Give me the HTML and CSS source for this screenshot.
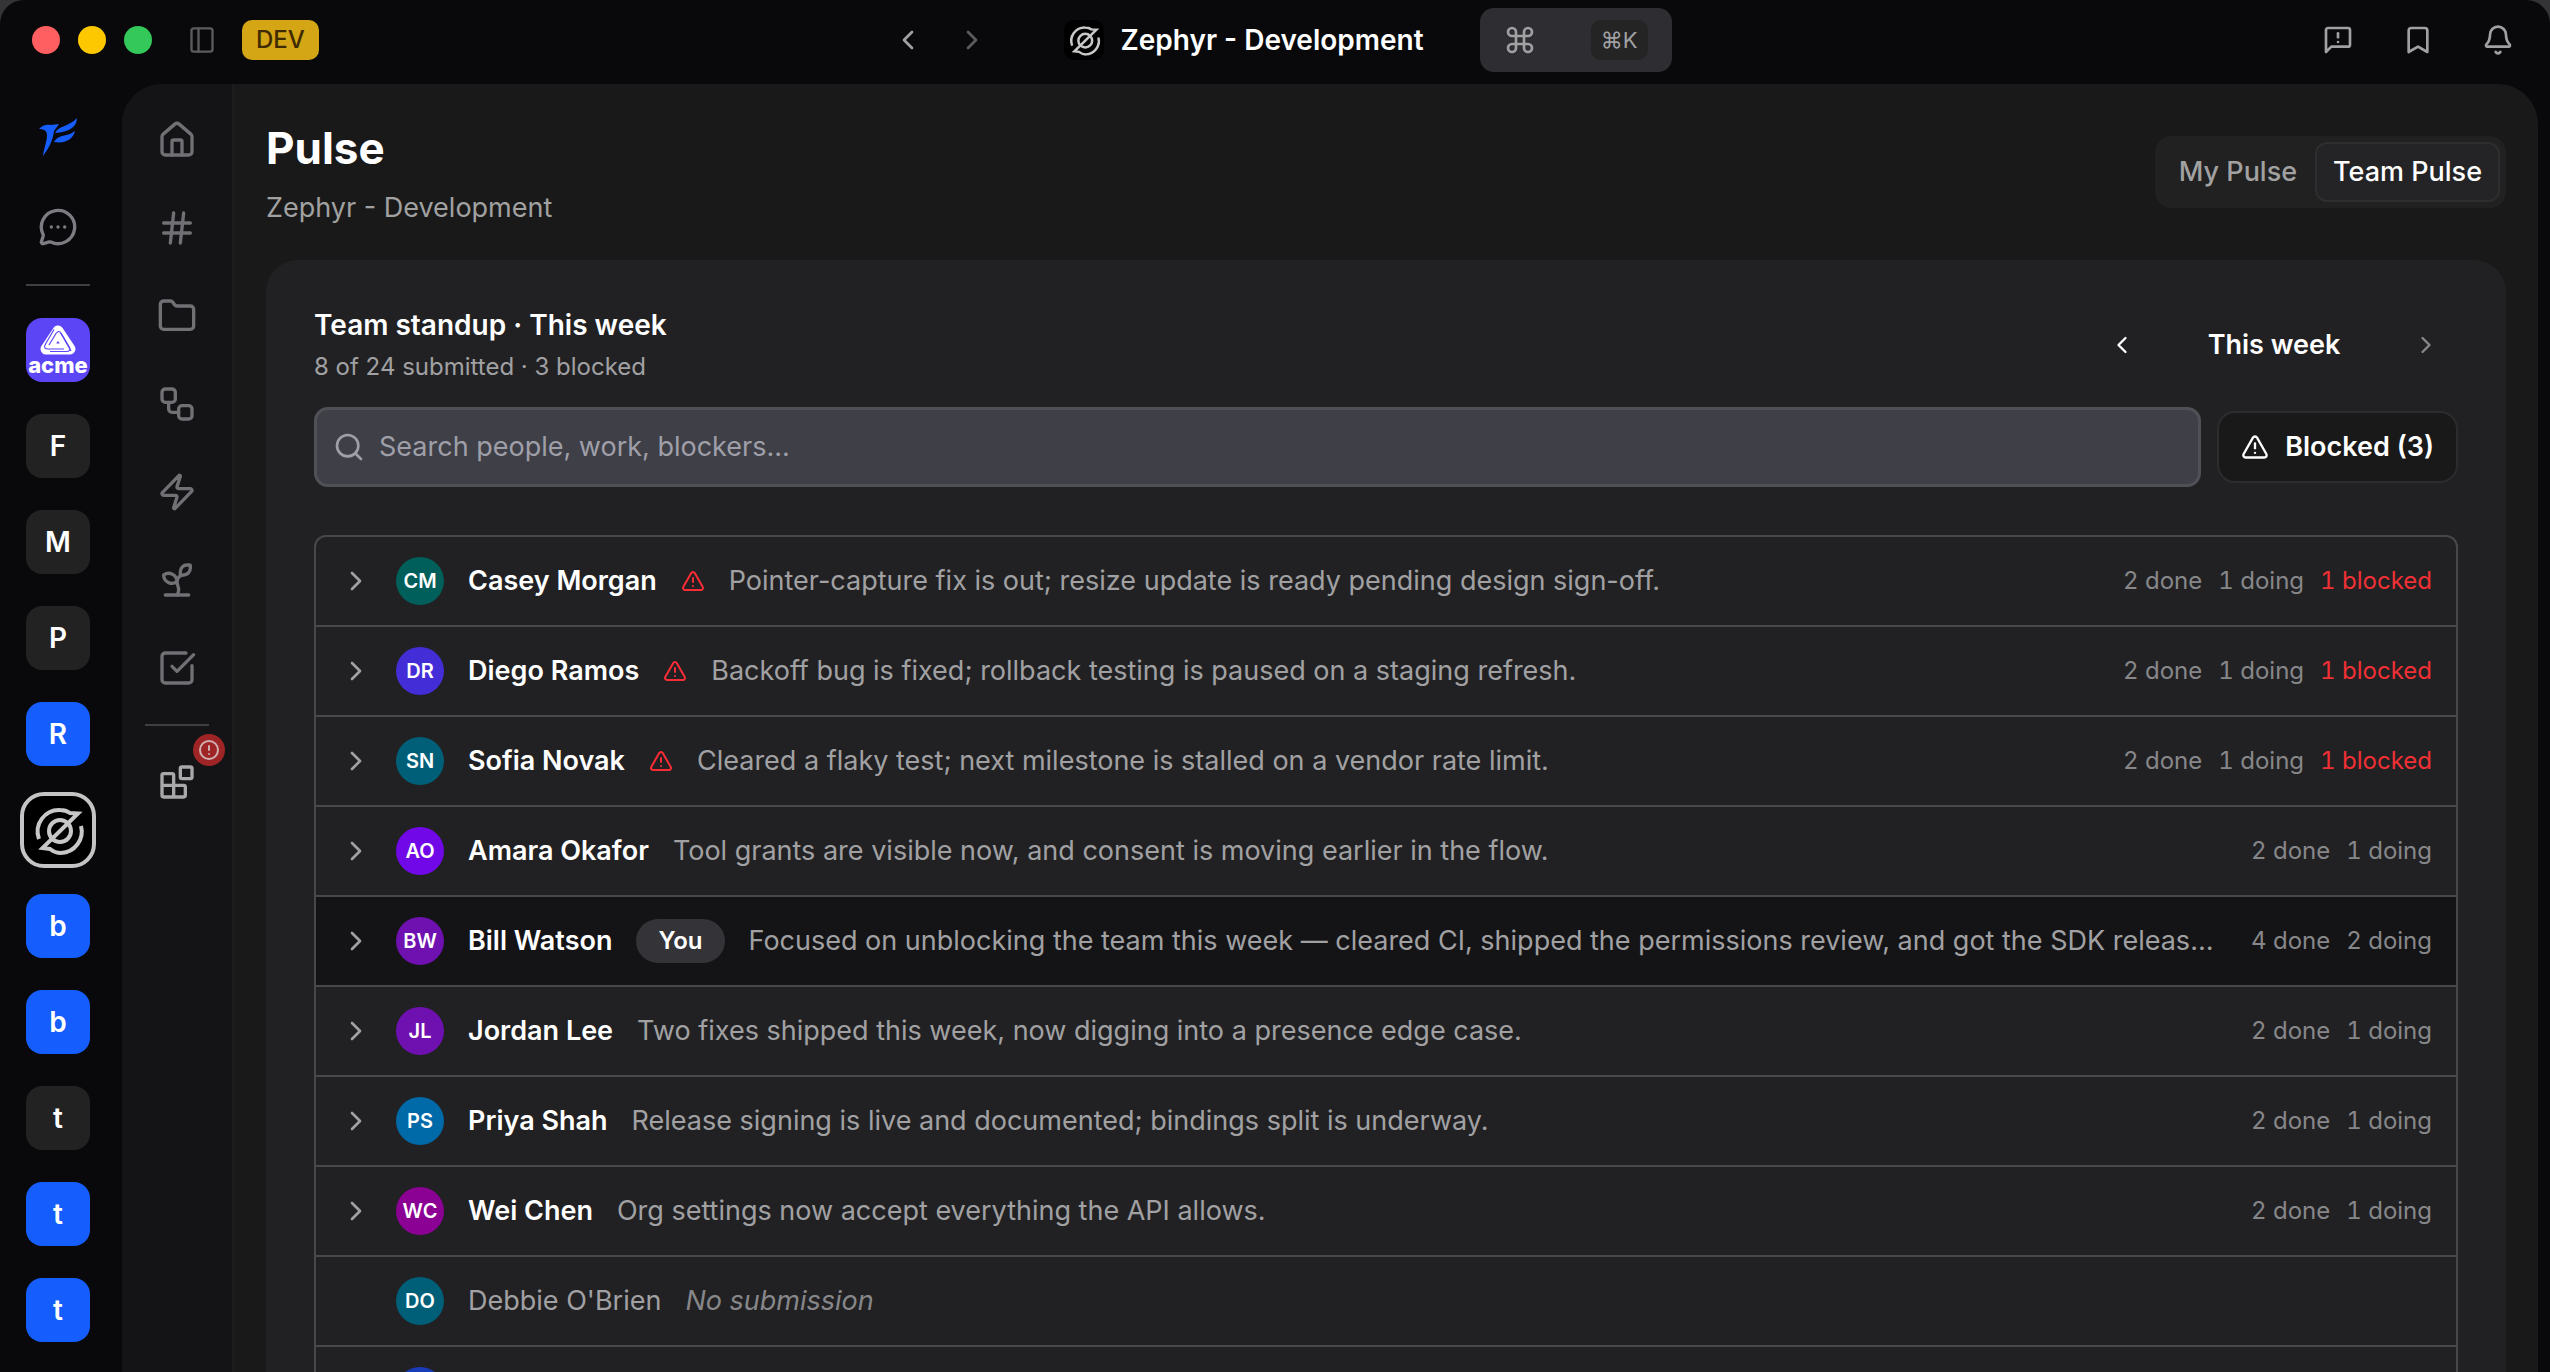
FILE: index.html
```html
<!DOCTYPE html>
<html lang="en">
<head>
    <meta charset="UTF-8">
    <meta name="viewport" content="width=device-width, initial-scale=1.0">
    <title>Pulse - Zephyr - Development</title>
    <link rel="stylesheet" href="styles.css">
</head>
<body>
    <!-- shared icon shapes -->
    <svg class="sprite" aria-hidden="true">
        <symbol id="i-left" viewBox="0 0 24 24"><path d="m15 18-6-6 6-6"/></symbol>
        <symbol id="i-right" viewBox="0 0 24 24"><path d="m9 18 6-6-6-6"/></symbol>
        <symbol id="i-warn" viewBox="0 0 24 24"><path d="m21.73 18-8-14a2 2 0 0 0-3.48 0l-8 14A2 2 0 0 0 4 21h16a2 2 0 0 0 1.73-3"/><path d="M12 9v4"/><path d="M12 17h.01"/></symbol>
        <symbol id="i-zephyr" viewBox="0 0 64 64">
            <path d="M13 41A21.500 21.500 0 0 1 34 12q6 0 10 3l8 .5L16.500 50l7.500 1q5 4 11 4a21.500 21.500 0 0 0 20-27"/>
            <circle cx="34" cy="33" r="11"/>
        </symbol>
    </svg>

    <header class="titlebar">
        <div class="titlebar-left">
            <div class="lights">
                <span class="light red"></span>
                <span class="light yellow"></span>
                <span class="light green"></span>
            </div>
            <button class="icon-btn dim" aria-label="Toggle sidebar">
                <svg class="icon s28" viewBox="0 0 24 24"><rect x="3" y="2" width="18" height="20" rx="2"/><path d="M9 2v20"/></svg>
            </button>
            <span class="dev">DEV</span>
        </div>
        <div class="titlebar-center">
            <button class="icon-btn" aria-label="Back"><svg class="icon s32"><use href="#i-left"/></svg></button>
            <button class="icon-btn dim" aria-label="Forward"><svg class="icon s32"><use href="#i-right"/></svg></button>
            <div class="current">
                <svg class="zephyr small"><use href="#i-zephyr"/></svg>
                <span>Zephyr - Development</span>
            </div>
            <button class="command" aria-label="Command menu">
                <svg class="icon s32" viewBox="0 0 24 24"><path d="M15 6v12a3 3 0 1 0 3-3H6a3 3 0 1 0 3 3V6a3 3 0 1 0-3 3h12a3 3 0 1 0-3-3"/></svg>
                <kbd>⌘K</kbd>
            </button>
        </div>
        <div class="titlebar-right">
            <button class="icon-btn" aria-label="Feedback">
                <svg class="icon s32" viewBox="0 0 24 24"><path d="M21 15.500a1.500 1.500 0 0 1-1.500 1.500H7l-4 4V4.500A1.500 1.500 0 0 1 4.500 3h15A1.500 1.500 0 0 1 21 4.500z"/><path d="M12 7v3"/><path d="M12 13.500h.01"/></svg>
            </button>
            <button class="icon-btn" aria-label="Bookmarks">
                <svg class="icon s32" viewBox="0 0 24 24"><path d="m19 21-7-4-7 4V5a2 2 0 0 1 2-2h10a2 2 0 0 1 2 2z"/></svg>
            </button>
            <button class="icon-btn" aria-label="Notifications">
                <svg class="icon s32" viewBox="0 0 24 24"><path d="M10.268 21a2 2 0 0 0 3.464 0"/><path d="M3.262 15.326A1 1 0 0 0 4 17h16a1 1 0 0 0 .74-1.673C19.410 13.956 18 12.499 18 8A6 6 0 0 0 6 8c0 4.499-1.411 5.956-2.738 7.326"/></svg>
            </button>
        </div>
    </header>

    <div class="shell">
        <nav class="workspaces" aria-label="Workspaces">
            <button class="space bare" aria-label="Home">
                <svg class="bird" viewBox="0 0 40 40"><path d="M1 12C4 8 9 7 13 8l8-1-5 7c-1 9-5 17-11 25 1-8 4-15 4-21 0-4-3-6-8-6z"/><path d="M17 16C20 9 32 9 39 1c0 9-8 14-22 15z"/><path d="M16 25c4-8 14-5 21-11-2 8-9 13-21 11z"/></svg>
            </button>
            <button class="space bare" aria-label="Messages">
                <svg class="icon s40" viewBox="0 0 24 24"><path d="M2.992 16.342a2 2 0 0 1 .094 1.167l-1.065 3.290a1 1 0 0 0 1.236 1.168l3.413-.998a2 2 0 0 1 1.099.092 10 10 0 1 0-4.777-4.719"/><path d="M8 12h.01"/><path d="M12 12h.01"/><path d="M16 12h.01"/></svg>
            </button>
            <hr class="rule">
            <button class="space acme" aria-label="acme">
                <svg class="acme-mark" viewBox="0 0 36 30"><path class="band" d="M18 6 30 24H6z"/><path class="groove" d="M10 26.500H26q6 0 3-5L21 8"/><path class="groove" d="M14 4.500 5.500 19q-3 5 3 5H24"/><path class="groove" d="M31 26 21 8.500q-2-4-5 0L9 20"/></svg>
                <span>acme</span>
            </button>
            <button class="space">F</button>
            <button class="space">M</button>
            <button class="space">P</button>
            <button class="space blue">R</button>
            <button class="space active" aria-label="Zephyr"><svg class="zephyr"><use href="#i-zephyr"/></svg></button>
            <button class="space blue">b</button>
            <button class="space blue">b</button>
            <button class="space">t</button>
            <button class="space blue">t</button>
            <button class="space blue">t</button>
        </nav>

        <div class="panel">
            <nav class="sidebar" aria-label="Sections">
                <a href="#" aria-label="Home"><svg class="icon s40" viewBox="0 0 24 24"><path d="M15 21v-8a1 1 0 0 0-1-1h-4a1 1 0 0 0-1 1v8"/><path d="M3 10a2 2 0 0 1 .709-1.528l7-5.999a2 2 0 0 1 2.582 0l7 5.999A2 2 0 0 1 21 10v9a2 2 0 0 1-2 2H5a2 2 0 0 1-2-2z"/></svg></a>
                <a href="#" aria-label="Channels"><svg class="icon s40" viewBox="0 0 24 24"><path d="M4 9h16"/><path d="M4 15h16"/><path d="M10 3 8 21"/><path d="m16 3-2 18"/></svg></a>
                <a href="#" aria-label="Files"><svg class="icon s40" viewBox="0 0 24 24"><path d="M20 20a2 2 0 0 0 2-2V8a2 2 0 0 0-2-2h-7.900a2 2 0 0 1-1.690-.900L9.600 3.900A2 2 0 0 0 7.930 3H4a2 2 0 0 0-2 2v13a2 2 0 0 0 2 2Z"/></svg></a>
                <a href="#" aria-label="Workflows"><svg class="icon s40" viewBox="0 0 24 24"><rect x="3" y="3" width="8" height="8" rx="2"/><path d="M7 11v4a2 2 0 0 0 2 2h4"/><rect x="13" y="13" width="8" height="8" rx="2"/></svg></a>
                <a href="#" aria-label="Automations"><svg class="icon s40" viewBox="0 0 24 24"><path d="M4 14a1 1 0 0 1-.780-1.630l9.900-10.200a.5.5 0 0 1 .860.460l-1.920 6.020A1 1 0 0 0 13 10h7a1 1 0 0 1 .780 1.630l-9.900 10.200a.5.5 0 0 1-.860-.460l1.920-6.020A1 1 0 0 0 11 14z"/></svg></a>
                <a href="#" aria-label="Growth"><svg class="icon s40" viewBox="0 0 24 24"><path d="M14 9.536V7a4 4 0 0 1 4-4h1.500a.5.5 0 0 1 .5.5V5a4 4 0 0 1-4 4 4 4 0 0 0-4 4c0 2 1 3 1 5a5 5 0 0 1-1 3"/><path d="M4 9a5 5 0 0 1 8 4 5 5 0 0 1-8-4"/><path d="M5 21h14"/></svg></a>
                <a href="#" aria-label="Tasks"><svg class="icon s40" viewBox="0 0 24 24"><path d="M21 10.656V19a2 2 0 0 1-2 2H5a2 2 0 0 1-2-2V5a2 2 0 0 1 2-2h12.344"/><path d="m9 11 3 3L22 4"/></svg></a>
                <hr class="rule">
                <a href="#" class="apps" aria-label="Apps"><svg class="icon s40" viewBox="0 0 24 24"><rect x="14" y="3" width="7" height="7" rx="1"/><path d="M10 21V8a1 1 0 0 0-1-1H4a1 1 0 0 0-1 1v12a1 1 0 0 0 1 1h12a1 1 0 0 0 1-1v-5a1 1 0 0 0-1-1H3"/></svg>
                    <span class="alert"><svg class="icon s20" viewBox="0 0 24 24"><circle cx="12" cy="12" r="9"/><path d="M12 8v4"/><path d="M12 16h.01"/></svg></span>
                </a>
            </nav>

            <main class="main">
                <div class="page-head">
                    <div>
                        <h1>Pulse</h1>
                        <p class="subtitle">Zephyr - Development</p>
                    </div>
                    <div class="tabs">
                        <button class="tab">My Pulse</button>
                        <button class="tab selected">Team Pulse</button>
                    </div>
                </div>

                <section class="card">
                    <div class="card-head">
                        <div>
                            <h2>Team standup · This week</h2>
                            <p class="summary">8 of 24 submitted · 3 blocked</p>
                        </div>
                        <div class="week">
                            <button class="icon-btn white" aria-label="Previous week"><svg class="icon s28"><use href="#i-left"/></svg></button>
                            <span>This week</span>
                            <button class="icon-btn faded" aria-label="Next week"><svg class="icon s28"><use href="#i-right"/></svg></button>
                        </div>
                    </div>

                    <div class="filters">
                        <label class="search">
                            <svg class="icon s32" viewBox="0 0 24 24"><circle cx="11" cy="11" r="8"/><path d="m21 21-4.340-4.340"/></svg>
                            <input type="text" placeholder="Search people, work, blockers..." aria-label="Search people, work, blockers">
                        </label>
                        <button class="blocked-btn"><svg class="icon s28"><use href="#i-warn"/></svg>Blocked (3)</button>
                    </div>

                    <ul class="people" id="people"></ul>
                </section>
            </main>
        </div>
    </div>

    <script src="script.js"></script>
</body>
</html>
```

FILE: styles.css
```css
* {
    margin: 0;
    padding: 0;
    box-sizing: border-box;
}

html {
    background-color: #343436;
}

body {
    display: flex;
    flex-direction: column;
    height: 100vh;
    overflow: hidden;
    background-color: #09090b;
    color: #fff;
    font-family: 'Inter', sans-serif;
    font-size: 27px;
    line-height: 40px;
    border-radius: 24px 24px 0 0;
}

button {
    background: none;
    border: none;
    color: inherit;
    font: inherit;
    cursor: pointer;
}

a {
    color: inherit;
}

ul {
    list-style-type: none;
}

/* icons */
.sprite {
    display: none;
}

.icon {
    display: block;
    flex-shrink: 0;
    fill: none;
    stroke: currentColor;
    stroke-width: 2;
    stroke-linecap: round;
    stroke-linejoin: round;
}

.s20 { width: 24px; height: 24px; }
.s28 { width: 28px; height: 28px; }
.s32 { width: 32px; height: 32px; }
.s40 { width: 40px; height: 40px; }

.icon-btn {
    display: flex;
    color: #a1a1a3;
}

.icon-btn.dim {
    color: #5c5c5f;
}

.icon-btn.faded {
    color: #88888a;
}

.icon-btn.white {
    color: #fff;
}

.zephyr {
    display: block;
    flex-shrink: 0;
    width: 64px;
    height: 64px;
    fill: none;
    stroke: #c8c8c8;
    stroke-width: 4;
}

.zephyr.small {
    width: 40px;
    height: 40px;
    background-color: #000;
    border-radius: 10px;
}

/* title bar */
.titlebar {
    display: grid;
    grid-template-columns: 1fr auto 1fr;
    align-items: center;
    height: 84px;
    padding: 0 36px 4px 32px;
}

.titlebar-left,
.titlebar-center,
.titlebar-right {
    display: flex;
    align-items: center;
}

.titlebar-left .icon-btn {
    margin: 0 26px 0 36px;
}

.lights {
    display: flex;
    gap: 18px;
}

.light {
    width: 28px;
    height: 28px;
    border-radius: 50%;
}

.red { background-color: #ff5f60; }
.yellow { background-color: #fdc800; }
.green { background-color: #34c759; }

.dev {
    padding: 0 14px;
    border-radius: 10px;
    background-color: #d4a514;
    color: #402a00;
    font-size: 24px;
    font-weight: 500;
}

.titlebar-center {
    gap: 32px;
    padding-left: 18px;
}

.current {
    display: flex;
    align-items: center;
    gap: 16px;
    margin: 0 24px 0 44px;
    font-size: 28px;
    font-weight: 600;
}

.command {
    display: flex;
    align-items: center;
    justify-content: space-between;
    width: 192px;
    height: 64px;
    padding: 0 24px;
    border-radius: 14px;
    background-color: #2e2e32;
    color: #a1a1a3;
}

kbd {
    padding: 0 10px;
    border-radius: 10px;
    background-color: #242425;
    font-family: 'Inter', sans-serif;
    font-size: 22px;
}

.titlebar-right {
    justify-content: flex-end;
    gap: 48px;
}

/* workspaces */
.shell {
    flex: 1;
    display: flex;
    min-height: 0;
}

.workspaces {
    display: flex;
    flex-direction: column;
    align-items: center;
    gap: 32px;
    width: 122px;
    padding: 24px 6px 0 0;
}

.space {
    display: flex;
    align-items: center;
    justify-content: center;
    flex-shrink: 0;
    width: 64px;
    height: 64px;
    border-radius: 16px;
    background-color: #222223;
    font-size: 28px;
    font-weight: 600;
}

.space.bare {
    height: 58px;
    background: none;
    color: #7c7c82;
}

.space.blue {
    background-color: #155dfc;
}

.space.active {
    width: 76px;
    height: 76px;
    margin: -6px 0;
    border: 4px solid #c4c4c4;
    border-radius: 24px;
    background-color: #000;
}

.space.acme {
    flex-direction: column;
    background-color: #5b45f5;
    overflow: hidden;
}

.acme-mark {
    width: 36px;
    height: 30px;
    fill: none;
    stroke-linejoin: round;
}

.band {
    stroke: #fff;
    stroke-width: 11;
}

.groove {
    stroke: #5b45f5;
    stroke-width: 1.2;
}

.acme span {
    font-size: 22px;
    font-weight: 800;
    line-height: 20px;
}

.bird {
    width: 40px;
    height: 40px;
    fill: #155dfc;
}

.rule {
    flex-shrink: 0;
    width: 64px;
    height: 2px;
    border: none;
    background-color: #3f3f42;
}

.workspaces .rule {
    margin-top: -4px;
}

/* panel */
.panel {
    flex: 1;
    display: flex;
    min-width: 0;
    margin-right: 12px;
    border-radius: 40px 40px 0 0;
    background-color: #191919;
    overflow: hidden;
}

.sidebar {
    display: flex;
    flex-direction: column;
    align-items: center;
    gap: 48px;
    flex-shrink: 0;
    width: 112px;
    padding-top: 36px;
    border-right: 2px solid #1c1c1d;
    background-color: #141416;
    color: #707075;
}

.sidebar .rule {
    margin: -12px 0;
}

.apps {
    position: relative;
    color: #a8a8aa;
}

.alert {
    position: absolute;
    top: -28px;
    left: 36px;
    display: flex;
    align-items: center;
    justify-content: center;
    width: 32px;
    height: 32px;
    border-radius: 50%;
    background-color: #9f2426;
    color: #d0b0b0;
}

.main {
    flex: 1;
    min-width: 0;
    padding: 32px 32px 0;
}

.page-head {
    display: flex;
    justify-content: space-between;
    align-items: center;
    margin-bottom: 32px;
}

h1 {
    font-size: 44px;
    font-weight: 700;
    line-height: 64px;
}

.subtitle {
    margin-top: 8px;
    color: #a1a1a1;
}

.tabs {
    display: flex;
    padding: 6px;
    border-radius: 16px;
    background-color: #212121;
}

.tab {
    padding: 8px 16px;
    border: 2px solid transparent;
    border-radius: 12px;
    color: #a1a1a1;
    font-weight: 500;
}

.tab.selected {
    border-color: #2e2e30;
    background-color: #242426;
    color: #fff;
}

/* standup card */
.card {
    padding: 43px 48px;
    border-radius: 32px;
    background-color: #212123;
}

.card-head {
    display: flex;
    justify-content: space-between;
    align-items: center;
    margin-bottom: 20px;
}

h2 {
    font-size: 28px;
    font-weight: 600;
    line-height: 44px;
}

.summary {
    color: #a1a1a3;
    font-size: 24px;
}

.week {
    display: flex;
    align-items: center;
    justify-content: space-between;
    width: 332px;
    margin-right: 18px;
    font-weight: 600;
}

.filters {
    display: flex;
    align-items: center;
    gap: 16px;
    margin-bottom: 48px;
}

.search {
    flex: 1;
    display: flex;
    align-items: center;
    gap: 14px;
    height: 80px;
    padding: 0 16px;
    border: 3px solid #505156;
    border-radius: 14px;
    background-color: #3f3f47;
    color: #9f9fa9;
}

.search input {
    flex: 1;
    min-width: 0;
    border: none;
    outline: none;
    background: none;
    color: #fff;
    font: inherit;
}

.search input::placeholder {
    color: #9f9fa9;
}

.blocked-btn {
    display: flex;
    align-items: center;
    gap: 16px;
    height: 72px;
    padding: 0 22px;
    border: 2px solid #2c2c2e;
    border-radius: 18px;
    background-color: #191919;
    font-weight: 600;
}

.people {
    border: 2px solid #48484a;
    border-radius: 12px;
    overflow: hidden;
}

.person {
    display: flex;
    align-items: center;
    gap: 24px;
    height: 90px;
    padding: 0 24px;
    border-bottom: 2px solid #48484a;
    white-space: nowrap;
}

.person.me {
    background-color: #141416;
}

.chevron {
    flex-shrink: 0;
    width: 32px;
    height: 32px;
    color: #a1a1a3;
}

.avatar {
    flex-shrink: 0;
    width: 48px;
    height: 48px;
    border-radius: 50%;
    font-size: 20px;
    font-weight: 600;
    line-height: 48px;
    text-align: center;
}

.teal { background-color: #005f5a; }
.indigo { background-color: #432dd7; }
.cyan { background-color: #005f78; }
.violet { background-color: #7008e7; }
.purple { background-color: #6e11b0; }
.sky { background-color: #0069a8; }
.fuchsia { background-color: #8a0194; }
.royal { background-color: #193cb8; }

.name {
    font-weight: 600;
}

.warn {
    width: 24px;
    height: 24px;
    color: #fb2c36;
}

.you {
    padding: 2px 22px;
    border-radius: 22px;
    background-color: #343438;
    font-size: 24px;
    font-weight: 600;
}

.note {
    flex: 1;
    min-width: 0;
    overflow: hidden;
    text-overflow: ellipsis;
    color: #a1a1a3;
}

.missing .name {
    color: #a1a1a3;
    font-weight: 400;
}

.missing .note {
    color: #87878a;
    font-style: italic;
}

.stats {
    display: flex;
    gap: 16px;
    color: #87878a;
    font-size: 24px;
    font-variant-numeric: tabular-nums;
}

.stats .blocked {
    color: #f03035;
}
```

FILE: script.js
```js
const people = [
    { name: "Casey Morgan", initials: "CM", color: "teal", note: "Pointer-capture fix is out; resize update is ready pending design sign-off.", done: 2, doing: 1, blocked: 1 },
    { name: "Diego Ramos", initials: "DR", color: "indigo", note: "Backoff bug is fixed; rollback testing is paused on a staging refresh.", done: 2, doing: 1, blocked: 1 },
    { name: "Sofia Novak", initials: "SN", color: "cyan", note: "Cleared a flaky test; next milestone is stalled on a vendor rate limit.", done: 2, doing: 1, blocked: 1 },
    { name: "Amara Okafor", initials: "AO", color: "violet", note: "Tool grants are visible now, and consent is moving earlier in the flow.", done: 2, doing: 1 },
    { name: "Bill Watson", initials: "BW", color: "purple", me: true, note: "Focused on unblocking the team this week — cleared CI, shipped the permissions review, and got the SDK released.", done: 4, doing: 2 },
    { name: "Jordan Lee", initials: "JL", color: "purple", note: "Two fixes shipped this week, now digging into a presence edge case.", done: 2, doing: 1 },
    { name: "Priya Shah", initials: "PS", color: "sky", note: "Release signing is live and documented; bindings split is underway.", done: 2, doing: 1 },
    { name: "Wei Chen", initials: "WC", color: "fuchsia", note: "Org settings now accept everything the API allows.", done: 2, doing: 1 },
    { name: "Debbie O'Brien", initials: "DO", color: "cyan" },
    { name: "", initials: "", color: "royal" }
];

function renderPerson(p) {
    const submitted = Boolean(p.note);
    return `<li class="person ${p.me ? "me" : ""} ${submitted ? "" : "missing"}">
        <span class="chevron">${submitted ? '<svg class="icon s32"><use href="#i-right"/></svg>' : ""}</span>
        <span class="avatar ${p.color}">${p.initials}</span>
        <span class="name">${p.name}</span>
        ${p.blocked ? '<svg class="icon warn"><use href="#i-warn"/></svg>' : ""}
        ${p.me ? '<span class="you">You</span>' : ""}
        <span class="note">${submitted ? p.note : p.name && "No submission"}</span>
        ${submitted ? `<span class="stats">
            <span>${p.done} done</span>
            <span>${p.doing} doing</span>
            ${p.blocked ? `<span class="blocked">${p.blocked} blocked</span>` : ""}
        </span>` : ""}
    </li>`;
}

document.getElementById("people").innerHTML = people.map(renderPerson).join("");
```
